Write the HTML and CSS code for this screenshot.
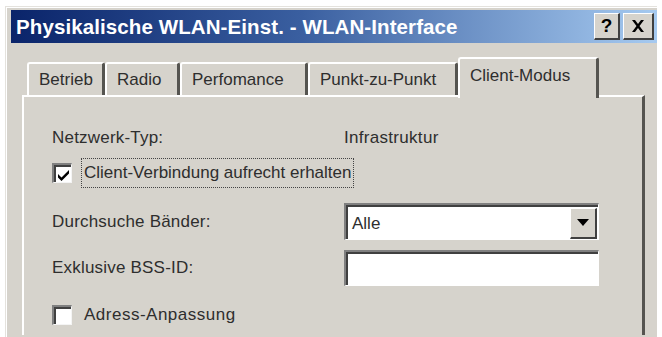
FILE: index.html
```html
<!DOCTYPE html>
<html lang="de">
<head>
<meta charset="utf-8">
<title>Physikalische WLAN-Einst.</title>
<link rel="stylesheet" href="styles.css">
</head>
<body>
<div class="window">
  <div class="titlebar">
    <span class="title">Physikalische WLAN-Einst. - WLAN-Interface</span>
    <div class="tbtns">
      <span class="tbtn">?</span>
      <span class="tbtn close">
        <svg width="14" height="12" viewBox="0 0 14 12"><path d="M1 0h3l3 4 3-4h3l-4.5 6 4.5 6h-3l-3-4-3 4h-3l4.5-6z" fill="#000"/></svg>
      </span>
    </div>
  </div>
  <div class="body">
    <div class="tabs">
      <span class="tab">Betrieb</span>
      <span class="tab">Radio</span>
      <span class="tab">Perfomance</span>
      <span class="tab">Punkt-zu-Punkt</span>
      <span class="tab active">Client-Modus</span>
    </div>
    <div class="panel">
      <div class="row r1">
        <span class="label">Netzwerk-Typ:</span>
        <span class="value">Infrastruktur</span>
      </div>
      <div class="row r2">
        <span class="check checked">
          <svg width="13" height="12" viewBox="0 0 13 12"><path d="M1 5l3.5 3.5 7.5-7.5v3.5l-7.5 7.5-3.5-3.5z" fill="#000"/></svg>
        </span>
        <span class="focus">Client-Verbindung aufrecht erhalten</span>
      </div>
      <div class="row r3">
        <span class="label">Durchsuche Bänder:</span>
        <span class="select"><span class="seltext">Alle</span><span class="dropbtn"><svg width="12" height="7" viewBox="0 0 12 7"><path d="M0 0h12l-6 7z" fill="#000"/></svg></span></span>
      </div>
      <div class="row r4">
        <span class="label">Exklusive BSS-ID:</span>
        <span class="input"></span>
      </div>
      <div class="row r5">
        <span class="check"></span>
        <span class="checklabel">Adress-Anpassung</span>
      </div>
    </div>
  </div>
</div>
</body>
</html>
```

FILE: styles.css
```css
html, body {
  margin: 0;
  padding: 0;
  background: #ffffff;
  overflow: hidden;
}
body {
  font-family: "Liberation Sans", Arial, sans-serif;
  font-size: 17px;
  color: #2e2e2e;
}
.window {
  margin: 6px 0 0 5px;
  width: 652px;
  height: 331px;
  overflow: hidden;
  background: #d6d3cc;
  border-top: 1px solid #e4e2dd;
  border-left: 1px solid #e4e2dd;
  box-shadow: inset 1px 1px 0 #ffffff;
  padding: 3px 0 0 5px;
  box-sizing: border-box;
}
.titlebar {
  height: 33px;
  background: linear-gradient(to right, #0a246a 0%, #3a5fa0 45%, #a6caf0 100%);
  display: flex;
  align-items: center;
  justify-content: space-between;
  padding-left: 5px;
}
.title {
  font-family: "Liberation Sans", Arial, sans-serif;
  font-weight: bold;
  font-size: 20.5px;
  color: #ffffff;
  letter-spacing: 0.1px;
}
.tbtns {
  display: flex;
  gap: 3px;
  padding-right: 3px;
}
.tbtn {
  width: 26px;
  height: 27px;
  box-sizing: border-box;
  background: #d6d3cc;
  border-top: 1px solid #ffffff;
  border-left: 1px solid #ffffff;
  border-right: 2px solid #404040;
  border-bottom: 2px solid #404040;
  display: flex;
  align-items: center;
  justify-content: center;
  font-weight: bold;
  font-size: 19px;
  color: #000;
}
.tbtn.close {
  width: 31px;
}
.body {
  padding: 14px 0 0 11px;
}
.tabs {
  display: flex;
  align-items: flex-end;
  height: 38px;
  padding-left: 5px;
  position: relative;
  z-index: 1;
}
.tab {
  height: 33px;
  box-sizing: border-box;
  padding: 0 10px;
  display: flex;
  align-items: center;
  border-top: 2px solid #ffffff;
  border-left: 2px solid #ffffff;
  border-right: 3px solid #555450;
  border-top-left-radius: 3px;
  border-top-right-radius: 3px;
  background: #d6d3cc;
}
.tab:nth-child(1) { width: 78px; }
.tab:nth-child(2) { width: 75px; }
.tab:nth-child(3) { width: 128px; }
.tab:nth-child(4) { width: 150px; }
.tab.active {
  width: 141px;
  height: 41px;
  margin-bottom: -3px;
  padding-bottom: 5px;
}
.panel {
  width: 623px;
  height: 240px;
  box-sizing: border-box;
  border-top: 2px solid #ffffff;
  border-left: 2px solid #ffffff;
  border-right: 3px solid #555450;
  padding: 22px 0 0 28px;
}
.row {
  display: flex;
  align-items: center;
}
.label {
  width: 292px;
  flex: none;
  letter-spacing: 0.2px;
}
.value {
  letter-spacing: 0.3px;
}
.r1 { height: 38px; }
.r2 { height: 32px; }
.r3 { height: 37px; margin-top: 14px; }
.r4 { height: 36px; margin-top: 10px; }
.r5 { height: 24px; margin-top: 17px; }
.check {
  width: 20px;
  height: 20px;
  box-sizing: border-box;
  background: #ffffff;
  border-top: 2px solid #808080;
  border-left: 2px solid #808080;
  border-right: 1px solid #f4f4f4;
  border-bottom: 1px solid #f4f4f4;
  box-shadow: inset 2px 2px 0 #404040;
  display: flex;
  align-items: center;
  justify-content: center;
  margin-right: 10px;
  flex: none;
}
.check svg {
  margin: 2px 0 0 2px;
}
.focus {
  outline: 1px dotted #444;
  padding: 4px 2px;
}
.checklabel {
  padding-left: 2px;
  letter-spacing: 0.5px;
}
.select, .input {
  width: 255px;
  height: 37px;
  box-sizing: border-box;
  background: #ffffff;
  border-top: 2px solid #808080;
  border-left: 2px solid #808080;
  border-right: 1px solid #ffffff;
  border-bottom: 1px solid #ffffff;
  box-shadow: inset 2px 2px 0 #404040;
  display: flex;
  align-items: center;
}
.input { height: 36px; }
.seltext {
  flex: 1;
  padding-left: 6px;
  padding-top: 3px;
}
.dropbtn {
  width: 27px;
  height: 31px;
  margin: 2px 1px 0 0;
  box-sizing: border-box;
  background: #d6d3cc;
  border-top: 1px solid #ffffff;
  border-left: 1px solid #ffffff;
  border-right: 2px solid #404040;
  border-bottom: 2px solid #404040;
  display: flex;
  align-items: center;
  justify-content: center;
}
```
